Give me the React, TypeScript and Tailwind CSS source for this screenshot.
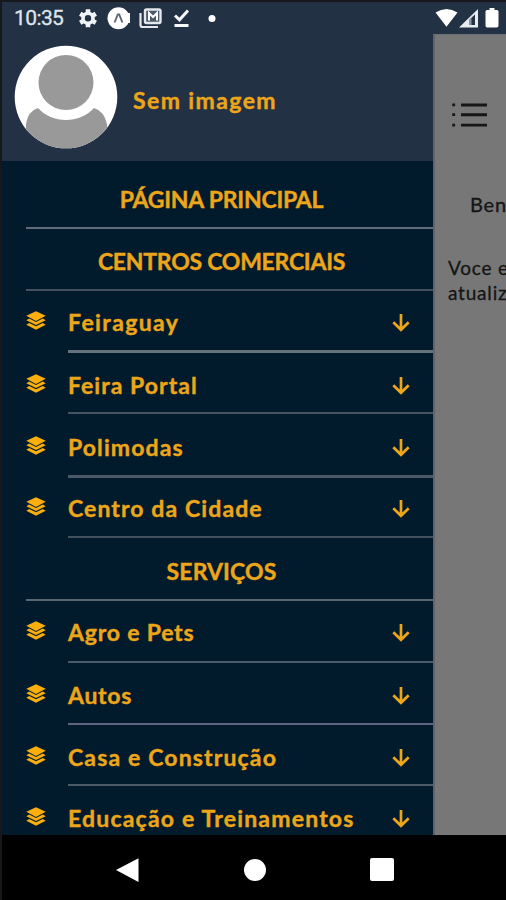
import type { ReactNode } from "react";

type Entry = {
  label: string;
  kind: "title" | "item";
  row: string;
  line: string;
  text: string;
};

const entries: Entry[] = [
  { label: "PÁGINA PRINCIPAL", kind: "title", row: "h-[68px] pt-[24px]", line: "border-b-2 border-[#5e6b79]", text: "tracking-[-0.22px]" },
  { label: "CENTROS COMERCIAIS", kind: "title", row: "h-[62px] pt-[18px]", line: "border-b-2 border-[#43515f]", text: "tracking-[-0.25px]" },
  { label: "Feiraguay", kind: "item", row: "h-[62px] pt-[17px]", line: "border-b-[3px] border-[#65727d]", text: "tracking-[1.4px]" },
  { label: "Feira Portal", kind: "item", row: "h-[61px] pt-[18px]", line: "border-b-2 border-[#445561]", text: "tracking-[1.05px]" },
  { label: "Polimodas", kind: "item", row: "h-[64px] pt-[19px]", line: "border-b-[3px] border-[#4b5966]", text: "tracking-[1.1px]" },
  { label: "Centro da Cidade", kind: "item", row: "h-[60px] pt-[16px]", line: "border-b-2 border-[#43515f]", text: "tracking-[1.1px]" },
  { label: "SERVIÇOS", kind: "title", row: "h-[63px] pt-[19px]", line: "border-b-2 border-[#5a6672]", text: "tracking-[0.1px]" },
  { label: "Agro e Pets", kind: "item", row: "h-[62px] pt-[17px]", line: "border-b-2 border-[#4b5b6b]", text: "tracking-[0.8px]" },
  { label: "Autos", kind: "item", row: "h-[62px] pt-[18px]", line: "border-b-2 border-[#5f6480]", text: "tracking-[0.7px]" },
  { label: "Casa e Construção", kind: "item", row: "h-[61px] pt-[18px]", line: "border-b-2 border-[#4b5a66]", text: "tracking-[1.15px]" },
  { label: "Educação e Treinamentos", kind: "item", row: "h-[62px] pt-[18px]", line: "", text: "tracking-[1.2px]" },
];

function Label({ className, children }: { className: string; children: ReactNode }) {
  return (
    <span className={`whitespace-nowrap text-[23px] leading-[28px] font-bold text-[#eda619] [-webkit-text-stroke:0.4px_#eda619] ${className}`}>
      {children}
    </span>
  );
}

function LayersIcon() {
  return (
    <svg viewBox="0 0 20 19" className="mt-[3px] h-[19px] w-5 shrink-0 fill-[#fcae0c]">
      <path d="M10 .3 19.700 4.800 10 9.900.3 4.800Z" />
      <path d="m3.200 7.400 6.800 3.500 6.800-3.500 2.900 1.800L10 14 .3 9.200Z" />
      <path d="m3.200 12 6.800 3.300 6.800-3.300 2.900 1.700L10 18.700.3 13.700Z" />
    </svg>
  );
}

function ArrowDown() {
  return (
    <svg viewBox="0 0 18 19" className="h-[19px] w-[18px] shrink-0 fill-none stroke-[#eda619] stroke-[2.7]">
      <path d="M9 1v15.500M1.300 9.300 9 16.800l7.700-7.500" />
    </svg>
  );
}

function Row({ entry }: { entry: Entry }) {
  if (entry.kind === "title") {
    return (
      <div className={`ml-[24px] flex shrink-0 justify-center pr-[16px] ${entry.row} ${entry.line}`}>
        <Label className={entry.text}>{entry.label}</Label>
      </div>
    );
  }
  return (
    <div className="flex shrink-0 pl-[24px]">
      <div className={`w-[42px] shrink-0 ${entry.row}`}>
        <LayersIcon />
      </div>
      <div className={`flex grow justify-between pr-[23px] ${entry.row} ${entry.line}`}>
        <Label className={entry.text}>{entry.label}</Label>
        <div className="pt-[5px]">
          <ArrowDown />
        </div>
      </div>
    </div>
  );
}

function StatusBar() {
  return (
    <header className="flex h-[32px] shrink-0 items-center bg-[#223144] pl-[12px]">
      <span className="w-[64px] font-[Roboto] text-[21px] leading-[32px] tracking-[-0.6px] text-[#dfe4ea] [-webkit-text-stroke:0.3px_#dfe4ea]">10:35</span>
      <svg viewBox="0 0 430 32" className="h-[32px] w-[430px] shrink-0">
        {/* settings gear */}
        <g transform="translate(12 16.200)">
          <circle r="5" fill="none" stroke="#f1f4f6" strokeWidth="3.600" />
          <path d="M0-9V-5M0 9V5M-7.800-4.500-4.300-2.500M7.800 4.500 4.300 2.500M-7.800 4.500-4.300 2.500M7.800-4.500 4.300-2.500" stroke="#f1f4f6" strokeWidth="4.600" />
        </g>
        {/* app badge */}
        <circle cx="42.500" cy="16.300" r="11" fill="#fff" />
        <path d="M51 11h3v10h-3z" fill="#fff" />
        <path d="m38.600 20.500 3.200-8h1.400l3.200 8" fill="none" stroke="#5d6671" strokeWidth="1.900" />
        {/* stacked mail */}
        <path d="M64.500 11v12a2 2 0 0 0 2 2H82" fill="none" stroke="#e4e8ec" strokeWidth="2.200" />
        <rect x="69" y="7.500" width="15.500" height="13.500" rx="1.500" fill="#4b5867" stroke="#e4e8ec" strokeWidth="2.400" />
        <path d="M73 18.500v-7.500l4 4 4-4v7.500" fill="none" stroke="#fff" strokeWidth="2" />
        {/* finished download */}
        <path d="m99 13.500 4.500 4.300 8.500-9.300" fill="none" stroke="#f5f7f8" strokeWidth="3" />
        <path d="M98.500 22h14v3h-14z" fill="#f5f7f8" />
        <circle cx="136" cy="16.500" r="3.500" fill="#fff" />
        {/* wifi, signal, battery */}
        <path d="M359.500 10.500q11-7 22 0L370.500 24.800Z" fill="#fff" />
        <path d="M383 25.500 402 7V25.500Z" fill="#e9ecef" />
        <path d="M393.500 23v-5.500l5.500-5v10.500Z" fill="#223144" />
        <path d="M393.500 23v-5.500l2-2V23Z" fill="#8893a0" />
        <path d="M413.500 6h5v2h2.500q1.500 0 1.500 1.500v14q0 2-1.500 2h-10q-1.500 0-1.500-2v-14q0-1.500 1.500-1.500h2.500Z" fill="#fff" />
      </svg>
    </header>
  );
}

function Avatar() {
  return (
    <svg viewBox="0 0 104 104" className="h-[104px] w-[104px] shrink-0">
      <clipPath id="avatar">
        <circle cx="52" cy="52" r="51.300" />
      </clipPath>
      <g clipPath="url(#avatar)">
        <rect width="104" height="104" fill="#fff" />
        <path d="M24 63Q14 66 12 79V104H93V79Q90 66 80 63C66 79 38 79 24 63Z" fill="#999" />
        <circle cx="52" cy="37.500" r="27.500" fill="#999" />
      </g>
    </svg>
  );
}

function Backdrop() {
  return (
    <section className="flex w-[73px] shrink-0 flex-col overflow-hidden border-t border-l-2 border-t-[#6c6d6e] border-l-[#626467] bg-[#777] pt-[66px]">
      <svg viewBox="0 0 36 28" className="ml-[16px] h-7 w-9 shrink-0 fill-[#151618]">
        <path d="M10 2.500h26v2.900H10zM10 12.300h26v2.900H10zM10 22.700h26v2.900H10zM1.300 2.500h2.800v2.800H1.300zM1.300 12.300h2.800v2.800H1.300zM1.300 22.700h2.800v2.800H1.300z" />
      </svg>
      <p className="mt-[63px] ml-[35px] whitespace-nowrap text-[20px] leading-[25px] tracking-[0.8px] text-[#151515] [-webkit-text-stroke:0.3px_#151515]">Ben</p>
      <p className="mt-[38px] ml-[13px] whitespace-nowrap text-[19px] leading-[25px] tracking-[0.8px] text-[#151515] [-webkit-text-stroke:0.3px_#151515]">
        Voce e<br />atualiz
      </p>
    </section>
  );
}

export default function App() {
  return (
    <div className="flex h-[900px] w-[506px] flex-col overflow-hidden border-t-2 border-l-2 border-[#17181b] bg-black font-[Lato,sans-serif]">
      <StatusBar />
      <main className="flex h-[801px] shrink-0">
        <aside className="flex w-[431px] shrink-0 flex-col overflow-hidden bg-[#011b2d]">
          <div className="flex h-[127px] shrink-0 bg-[#223144] pt-[11px] pl-[12px]">
            <Avatar />
            <div className="pt-[41px] pl-[15px]">
              <Label className="tracking-[1.4px]">Sem imagem</Label>
            </div>
          </div>
          {entries.map((entry) => (
            <Row key={entry.label} entry={entry} />
          ))}
        </aside>
        <Backdrop />
      </main>
      <nav className="flex h-[65px] shrink-0 items-start bg-black pt-[23px] pl-[114px]">
        <svg viewBox="0 0 24 25" className="h-[25px] w-6 fill-white">
          <path d="M0 12 22.500.300V24Z" />
        </svg>
        <div className="mt-[1px] ml-[104px] h-[22px] w-[22px] rounded-full bg-white" />
        <div className="ml-[104px] h-[23px] w-[24px] rounded-[2px] bg-white" />
      </nav>
    </div>
  );
}
